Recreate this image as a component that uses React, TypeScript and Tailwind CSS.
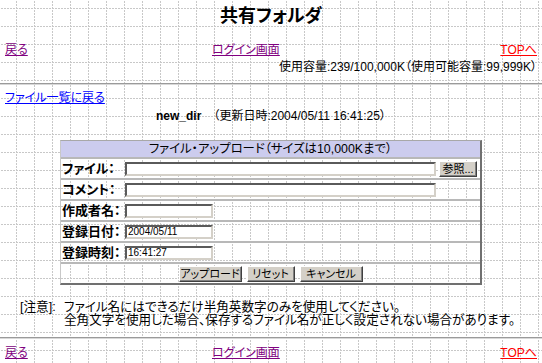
const GRID =
  "bg-white bg-[image:linear-gradient(to_bottom,#fff_1px,transparent_1px),linear-gradient(to_right,#fff_1px,transparent_1px),linear-gradient(to_right,#c8c8c8_1px,transparent_1px),linear-gradient(to_bottom,#c8c8c8_1px,transparent_1px)] bg-[size:3px_3px,3px_3px,18px_18px,18px_18px] bg-[position:0_0,0_0,16px_0,0_8px]";

const INPUT =
  "h-[14px] border-2 border-t-[#5a5a5a] border-l-[#5a5a5a] border-r-[#d4d0c8] border-b-[#d4d0c8] bg-white px-[1px] text-[10px] leading-[10px] outline-none";

const BTN =
  "h-[16px] border border-t-white border-l-white border-r-[#404040] border-b-[#404040] bg-[#d4d0c8] text-[11px] leading-[12px] shadow-[inset_-1px_-1px_0_#808080]";

function Row({ label, children }: { label: string; children: React.ReactNode }) {
  return (
    <div className="flex h-[21px] items-center border-t-2 border-t-[#b8b8b8]">
      <div className="w-[63px] shrink-0 pl-[1px] text-[13px] font-bold leading-[16px] whitespace-nowrap">
        {label}
      </div>
      <div className="ml-[1px] flex items-center gap-[3px]">{children}</div>
    </div>
  );
}

function LinkRow() {
  return (
    <div className="flex px-[5px] text-[12px] leading-[14px]">
      <div className="w-[207px]">
        <a className="text-[#800080] underline">戻る</a>
      </div>
      <a className="text-[#800080] underline">ログイン画面</a>
      <a className="ml-auto text-[#ff0000] underline">TOPへ</a>
    </div>
  );
}

export default function App() {
  return (
    <div
      className={`min-h-screen w-full text-black font-['Liberation_Sans','Noto_Sans_CJK_JP',sans-serif] [font-feature-settings:'palt'] ${GRID}`}
    >
      <h1 className="pt-[5px] text-center text-[18px] leading-[22px] font-bold">共有フォルダ</h1>

      <div className="mt-[16px]">
        <LinkRow />
      </div>
      <div className="mt-[3px] pr-[5px] text-right text-[12px] leading-[14px]">
        使用容量:239/100,000K（使用可能容量:99,999K）
      </div>

      <div className="mt-[9px] h-[2px] border-t border-t-[#9a9a9a] border-b border-b-[#d8d8d8]" />

      <div className="mt-[6px] px-[5px] text-[12px] leading-[14px]">
        <a className="text-[#0000ff] underline">ファイル一覧に戻る</a>
      </div>
      <div className="mt-[4px] text-center text-[12px] leading-[14px]">
        <span className="font-bold">new_dir</span>　（更新日時:2004/05/11 16:41:25）
      </div>

      {/* upload form */}
      <div className="mx-auto mt-[17px] w-[422px] border-t border-l border-r-2 border-b-2 border-t-[#a8a8a8] border-l-[#c8c8c8] border-r-[#707070] border-b-[#707070]">
        <div className="h-[16px] bg-[#ccccee] text-center text-[12.4px] leading-[16px]">
          ファイル・アップロード（サイズは10,000Kまで）
        </div>
        <Row label="ファイル：">
          <input className={`${INPUT} w-[311px]`} />
          <button className={`${BTN} w-[38px]`}>参照...</button>
        </Row>
        <Row label="コメント：">
          <input className={`${INPUT} w-[311px]`} />
        </Row>
        <Row label="作成者名：">
          <input className={`${INPUT} w-[88px]`} />
        </Row>
        <Row label="登録日付：">
          <input className={`${INPUT} w-[88px]`} defaultValue="2004/05/11" />
        </Row>
        <Row label="登録時刻：">
          <input className={`${INPUT} w-[88px]`} defaultValue="16:41:27" />
        </Row>
        <div className="flex h-[21px] items-center justify-center gap-[5px] border-t-2 border-t-[#b8b8b8]">
          <button className={`${BTN} w-[63px]`}>アップロード</button>
          <button className={`${BTN} w-[48px]`}>リセット</button>
          <button className={`${BTN} w-[63px]`}>キャンセル</button>
        </div>
      </div>

      <div className="mt-[16px] flex pl-[20px] text-[12.6px] leading-[13px]">
        <div className="w-[44px] shrink-0">[注意]:</div>
        <div>
          ファイル名にはできるだけ半角英数字のみを使用してください。
          <br />
          全角文字を使用した場合、保存するファイル名が正しく設定されない場合があります。
        </div>
      </div>

      <div className="mt-[10px] h-[2px] border-t border-t-[#9a9a9a] border-b border-b-[#d8d8d8]" />

      <div className="mt-[7px]">
        <LinkRow />
      </div>
    </div>
  );
}
